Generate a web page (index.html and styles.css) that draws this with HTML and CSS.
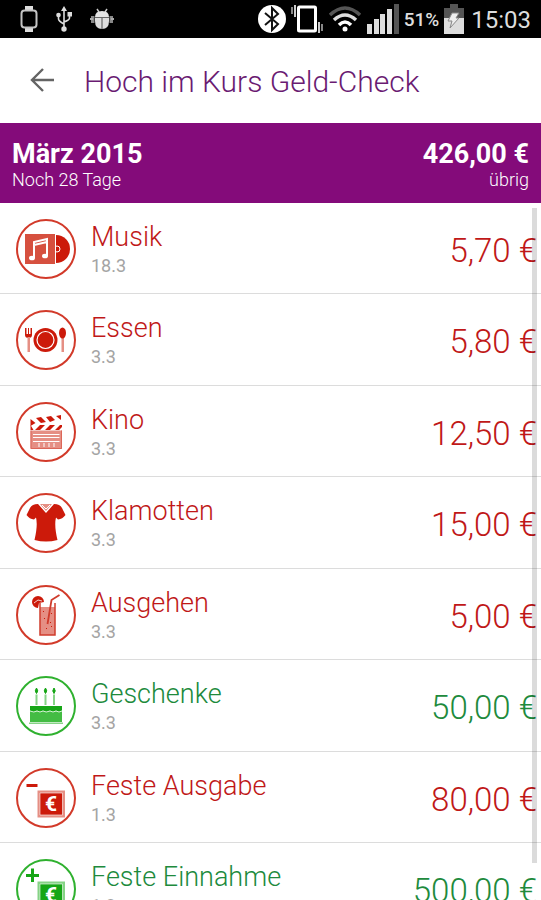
FILE: index.html
```html
<!DOCTYPE html>
<html lang="de">
<head>
    <meta charset="UTF-8">
    <meta name="viewport" content="width=device-width, initial-scale=1.0">
    <title>Hoch im Kurs Geld-Check</title>
    <link rel="stylesheet" href="styles.css">
</head>
<body>
    <div class="statusbar">
        <div class="status-left">
            <svg width="18" height="26" viewBox="0 0 18 26"><path d="M5 0h8v4H5zM5 22h8v4H5z" fill="#ddd"/><rect x="1.5" y="4.5" width="15" height="17" rx="3" fill="#000" stroke="#c4c4c4" stroke-width="2"/></svg>
            <svg width="16" height="26" viewBox="0 0 16 26" fill="none" stroke="#ddd" stroke-width="1.6"><path d="M8 3v20M2.5 10v3q0 2 5.500 5M13.500 8v4q0 2-5.500 4"/><path d="M8 0l3 5H5z" fill="#ddd" stroke="none"/><circle cx="2.500" cy="9" r="2.300" fill="#ddd" stroke="none"/><path d="M11.500 6H16v4.500h-4.500z" fill="#ddd" stroke="none"/><circle cx="8" cy="23" r="2.700" fill="#ddd" stroke="none"/></svg>
            <svg width="24" height="22" viewBox="0 0 24 22"><path d="M7 1l2 3M17 1l-2 3" stroke="#ccc" stroke-width="1.500"/><path d="M5 9q0-6 7-6t7 6z" fill="#e4e4e4"/><path d="M5 10h14v3q0 8-7 8t-7-8z" fill="#ddd"/><path d="M12 10v11M5 9.500h14" stroke="#666" stroke-width="1.200"/><path d="M1 8h3.500v7H1zM19.500 8H23v7h-3.500z" fill="#888"/><path d="M0 11h3M21 11h3" stroke="#aaa" stroke-width="2"/></svg>
        </div>
        <div class="status-right">
            <svg width="28" height="28" viewBox="0 0 28 28"><circle cx="14" cy="14" r="14" fill="#fff"/><path d="M7 8l13 11-6 6V3l6 6L7 20" fill="none" stroke="#111" stroke-width="2"/></svg>
            <svg width="32" height="30" viewBox="0 0 32 30"><rect x="7.500" y="3" width="17" height="24" rx="1" fill="none" stroke="#fff" stroke-width="3"/><path d="M4 1v12M28 18v11" stroke="#ccc" stroke-width="2"/><path d="M1 3v7M31 20v7" stroke="#888" stroke-width="2"/></svg>
            <svg width="34" height="26" viewBox="0 0 34 26" fill="none" stroke-width="3.500"><path d="M2 9q15-14 30 0" stroke="#555"/><path d="M6 14q11-10 22 0" stroke="#ddd"/><path d="M11 19q6-6 12 0" stroke="#fff"/><circle cx="17" cy="23" r="2.500" fill="#fff"/></svg>
            <svg width="32" height="30" viewBox="0 0 32 30" fill="#ddd"><path d="M0 20h5v10H0zM7 15h5v15H7zM13 10h5v20h-5zM20 5h5v25h-5z"/><path d="M27 0h5v30h-5z" fill="#555"/></svg>
            <span class="battery-text">51%</span>
            <svg width="20" height="30" viewBox="0 0 20 30"><path d="M6 0h8v4h6v11H0V4h6z" fill="#555"/><path d="M0 14h20v16H0z" fill="#ddd"/><path d="M8 9h7l-3 5h3L6 24l2-7H4z" fill="#eee" stroke="#888"/></svg>
            <span class="clock">15:03</span>
        </div>
    </div>

    <header class="toolbar">
        <button class="back" type="button" aria-label="Zurück">
            <svg width="24" height="24" viewBox="0 0 24 24" fill="none" stroke="#646464" stroke-width="2.400"><path d="M24 12H2M13 1L2 12l11 11"/></svg>
        </button>
        <h1>Hoch im Kurs Geld-Check</h1>
    </header>

    <section class="summary">
        <div>
            <h2>März 2015</h2>
            <p>Noch 28 Tage</p>
        </div>
        <div class="summary-right">
            <strong>426,00 €</strong>
            <p>übrig</p>
        </div>
    </section>

    <main class="list">
        <ul>
            <li class="entry expense">
                <svg class="icon" viewBox="0 0 60 60">
                    <circle class="ring" cx="30" cy="30" r="29"/>
                    <path d="M40 16a14 14 0 0 1 0 28z"/>
                    <circle cx="41" cy="30" r="3" fill="none" stroke="#fff"/>
                    <path class="soft" d="M9 15h30v30H9z"/>
                    <path d="M18 39V23l13-3v17M18 26l13-3" fill="none" stroke="#fff" stroke-width="2"/>
                    <ellipse cx="16" cy="39" rx="3" ry="2.300" fill="#fff"/><ellipse cx="29" cy="37" rx="3" ry="2.300" fill="#fff"/>
                </svg>
                <div class="info"><h3>Musik</h3><p>18.3</p></div>
                <span class="amount">5,70 €</span>
            </li>
            <li class="entry expense">
                <svg class="icon" viewBox="0 0 60 60">
                    <circle class="ring" cx="30" cy="30" r="29"/>
                    <circle cx="29.500" cy="30" r="12"/>
                    <circle cx="29.500" cy="30" r="8.500" fill="none" stroke="#fff" stroke-width="1.200"/>
                    <path d="M9 18h1.500v6H12v-6h1v6h1.500v-6H16v7q0 3-3.500 3T9 25z"/>
                    <path class="pale" d="M11.500 27h2.500v15h-2.500zM45.500 27h2.500v15h-2.500z"/>
                    <ellipse cx="46.500" cy="23" rx="3.500" ry="5.500"/>
                </svg>
                <div class="info"><h3>Essen</h3><p>3.3</p></div>
                <span class="amount">5,80 €</span>
            </li>
            <li class="entry expense">
                <svg class="icon" viewBox="0 0 60 60">
                    <circle class="ring" cx="30" cy="30" r="29"/>
                    <path d="M14.500 17l5 4-5 3zM20 16l5-1 5 5-5 1zM30 15l5-1 4 4-5 2zM40 14l5-1v5z"/>
                    <path d="M14.500 23v5h3zM19 28l5-5h5l-5 5zM29 28l5-5h5l-5 5zM39 28l5-5h2v2l-3 3z"/>
                    <path class="pale" d="M14.500 28.500H46V47H14.500z"/>
                    <path d="M17 32.500h26.500M17 35.500h26.500M17 39.500h26.500" stroke="#fff" stroke-width="1"/>
                    <path d="M23 41v4M28 41v4M33 41v4M38 41v4" stroke="#fff" stroke-width="1"/>
                    <path d="M15 28.500v18h30.500v-18" fill="none" stroke="#dc6658"/>
                </svg>
                <div class="info"><h3>Kino</h3><p>3.3</p></div>
                <span class="amount">12,50 €</span>
            </li>
            <li class="entry expense">
                <svg class="icon" viewBox="0 0 60 60">
                    <circle class="ring" cx="30" cy="30" r="29"/>
                    <path d="M22 11l8 9 8-9q6 0 8 4l3.500 7q-3 4-7.500 4.500l-2-2q-2 8 1.500 22.500-11.500 3-23 0Q22 32 20 24.500l-2 2q-4.500-.5-7.500-4.500L14 15q2-4 8-4z"/>
                    <path class="pale" d="M24 11h12l-6 7z"/>
                    <path d="M26 12l4 4 4-4" fill="none" stroke="#fff"/>
                </svg>
                <div class="info"><h3>Klamotten</h3><p>3.3</p></div>
                <span class="amount">15,00 €</span>
            </li>
            <li class="entry expense">
                <svg class="icon" viewBox="0 0 60 60">
                    <circle class="ring" cx="30" cy="30" r="29"/>
                    <path d="M16 17a6 6 0 1 1 12 0l-5 1-1 5a6 6 0 0 1-6-6z"/>
                    <path d="M18 18l4-3 4 1" fill="none" stroke="#fff" stroke-width=".8"/>
                    <path class="pale" d="M24 22h15v28H24z"/>
                    <path d="M24 18v32h15V18" fill="none" stroke="#cf3c2c" stroke-width="1.500"/>
                    <path d="M43.500 10L35.500 15l-4 24" fill="none" stroke="#cf3c2c" stroke-width="1.800"/>
                    <path d="M27 26h1v1h-1zM35 28h1v1h-1zM28 33h1v1h-1zM34 37h1v1h-1zM30 43h1v1h-1zM35 41h1v1h-1z"/>
                </svg>
                <div class="info"><h3>Ausgehen</h3><p>3.3</p></div>
                <span class="amount">5,00 €</span>
            </li>
            <li class="entry income">
                <svg class="icon" viewBox="0 0 60 60">
                    <circle class="ring" cx="30" cy="30" r="29"/>
                    <path d="M20.500 12q2.500 3 0 5.500-2.500-2.500 0-5.500zM29.500 12q2.500 3 0 5.500-2.500-2.500 0-5.500zM38 12q2.500 3 0 5.500-2.500-2.500 0-5.500z" stroke="#16a616"/>
                    <path class="pale" d="M19.500 18.500h2V29h-2zM28.500 18.500h2V29h-2zM37 18.500h2V29h-2z"/>
                    <path class="soft" d="M14 33h32v13H14z"/>
                    <path d="M14 30h32v4q-3 3-6 0-3 3-6 0-4 3-7 0-3 3-6 0-4 3-7 0z"/>
                    <path d="M14 35q4 2 7 0 3 2 6 0 3 2 7 0 3 2 6 0 3 2 6 0" fill="none" stroke="#fff" stroke-width=".8"/>
                    <path class="pale" d="M13 46.500h34V48H13z"/>
                </svg>
                <div class="info"><h3>Geschenke</h3><p>3.3</p></div>
                <span class="amount">50,00 €</span>
            </li>
            <li class="entry expense">
                <svg class="icon" viewBox="0 0 60 60">
                    <circle class="ring" cx="30" cy="30" r="29"/>
                    <path d="M10.500 16h11v3h-11z"/>
                    <path class="pale" d="M21.500 22.500H49v27H21.500z"/>
                    <path d="M24 25h22.500v22H24z" stroke="#fff" stroke-width=".6"/>
                    <text class="euro" x="35" y="43">€</text>
                </svg>
                <div class="info"><h3>Feste Ausgabe</h3><p>1.3</p></div>
                <span class="amount">80,00 €</span>
            </li>
            <li class="entry income">
                <svg class="icon" viewBox="0 0 60 60">
                    <circle class="ring" cx="30" cy="30" r="29"/>
                    <path d="M10 15h5V9.500h3V15h5v3h-5v5h-3v-5h-5z"/>
                    <path class="pale" d="M21.500 22.500H49v27H21.500z"/>
                    <path d="M24 25h22.500v22H24z" stroke="#fff" stroke-width=".6"/>
                    <text class="euro" x="35" y="43">€</text>
                </svg>
                <div class="info"><h3>Feste Einnahme</h3><p>1.3</p></div>
                <span class="amount">500,00 €</span>
            </li>
        </ul>
        <div class="scrollbar"></div>
    </main>
</body>
</html>
```
FILE: styles.css
```css
* {
    box-sizing: border-box;
}
body {
    font-family: Roboto, "Liberation Sans", sans-serif;
    margin: 0;
    height: 100vh;
    display: flex;
    flex-direction: column;
    overflow: hidden;
    background: #fff;
}
h1, h2, h3, p, ul {
    margin: 0;
    padding: 0;
}
.statusbar {
    flex: none;
    height: 38px;
    padding: 0 10px 0 20px;
    background: #000;
    color: #ddd;
    display: flex;
    justify-content: space-between;
    align-items: center;
}
.status-left {
    display: flex;
    align-items: center;
    gap: 18px;
}
.status-right {
    display: flex;
    align-items: center;
    gap: 5px;
}
.battery-text {
    font-size: 19px;
    font-weight: 500;
}
.clock {
    font-size: 24px;
    padding: 2px 0 0 2px;
}
.toolbar {
    flex: none;
    height: 85px;
    padding: 2px 30px 0;
    display: flex;
    align-items: center;
    gap: 30px;
}
.back {
    border: 0;
    padding: 0 0 4px;
    background: none;
    display: flex;
    cursor: pointer;
}
.toolbar h1 {
    font-size: 30px;
    font-weight: 300;
    color: #6a1b72;
    white-space: nowrap;
}
.summary {
    flex: none;
    height: 80px;
    padding: 4px 12px 0;
    background: #840b7a;
    color: #fff;
    display: flex;
    justify-content: space-between;
    align-items: center;
}
.summary h2, .summary strong {
    display: block;
    font-size: 27px;
    line-height: 30px;
    font-weight: 700;
}
.summary p {
    font-size: 18px;
    line-height: 22px;
    font-weight: 300;
}
.summary-right {
    text-align: right;
}
.list {
    flex: 1;
    min-height: 0;
    position: relative;
    overflow: hidden;
}
.list ul {
    list-style: none;
}
.entry {
    height: 91px;
    padding: 1px 4px 0 16px;
    border-bottom: 1px solid #dcdcdc;
    display: flex;
    align-items: center;
    gap: 15px;
}
.entry:nth-child(even) {
    height: 92px;
}
.expense {
    color: #c01818;
    fill: #cc1a0a;
}
.income {
    color: #208a3c;
    fill: #16a616;
}
.icon {
    flex: none;
    width: 60px;
    height: 60px;
}
.ring {
    fill: none;
    stroke-width: 2;
}
.expense .ring {
    stroke: #d23a2a;
}
.income .ring {
    stroke: #2fb12f;
}
.expense .soft {
    fill: #d6503f;
}
.income .soft {
    fill: #43bc43;
}
.expense .pale {
    fill: #e58f84;
}
.income .pale {
    fill: #86d386;
}
.euro {
    fill: #fff;
    font-size: 21px;
    font-weight: 700;
    text-anchor: middle;
}
.info {
    flex: 1;
}
.info h3 {
    font-size: 27px;
    line-height: 34px;
    font-weight: 300;
}
.info p {
    font-size: 18px;
    line-height: 24px;
    color: #a4a4a4;
}
.amount {
    padding-top: 3px;
    font-size: 33px;
    font-weight: 300;
    white-space: nowrap;
}
.scrollbar {
    position: absolute;
    top: 5px;
    right: 4px;
    bottom: 37px;
    width: 5px;
    background: rgba(0, 0, 0, 0.14);
}
```
